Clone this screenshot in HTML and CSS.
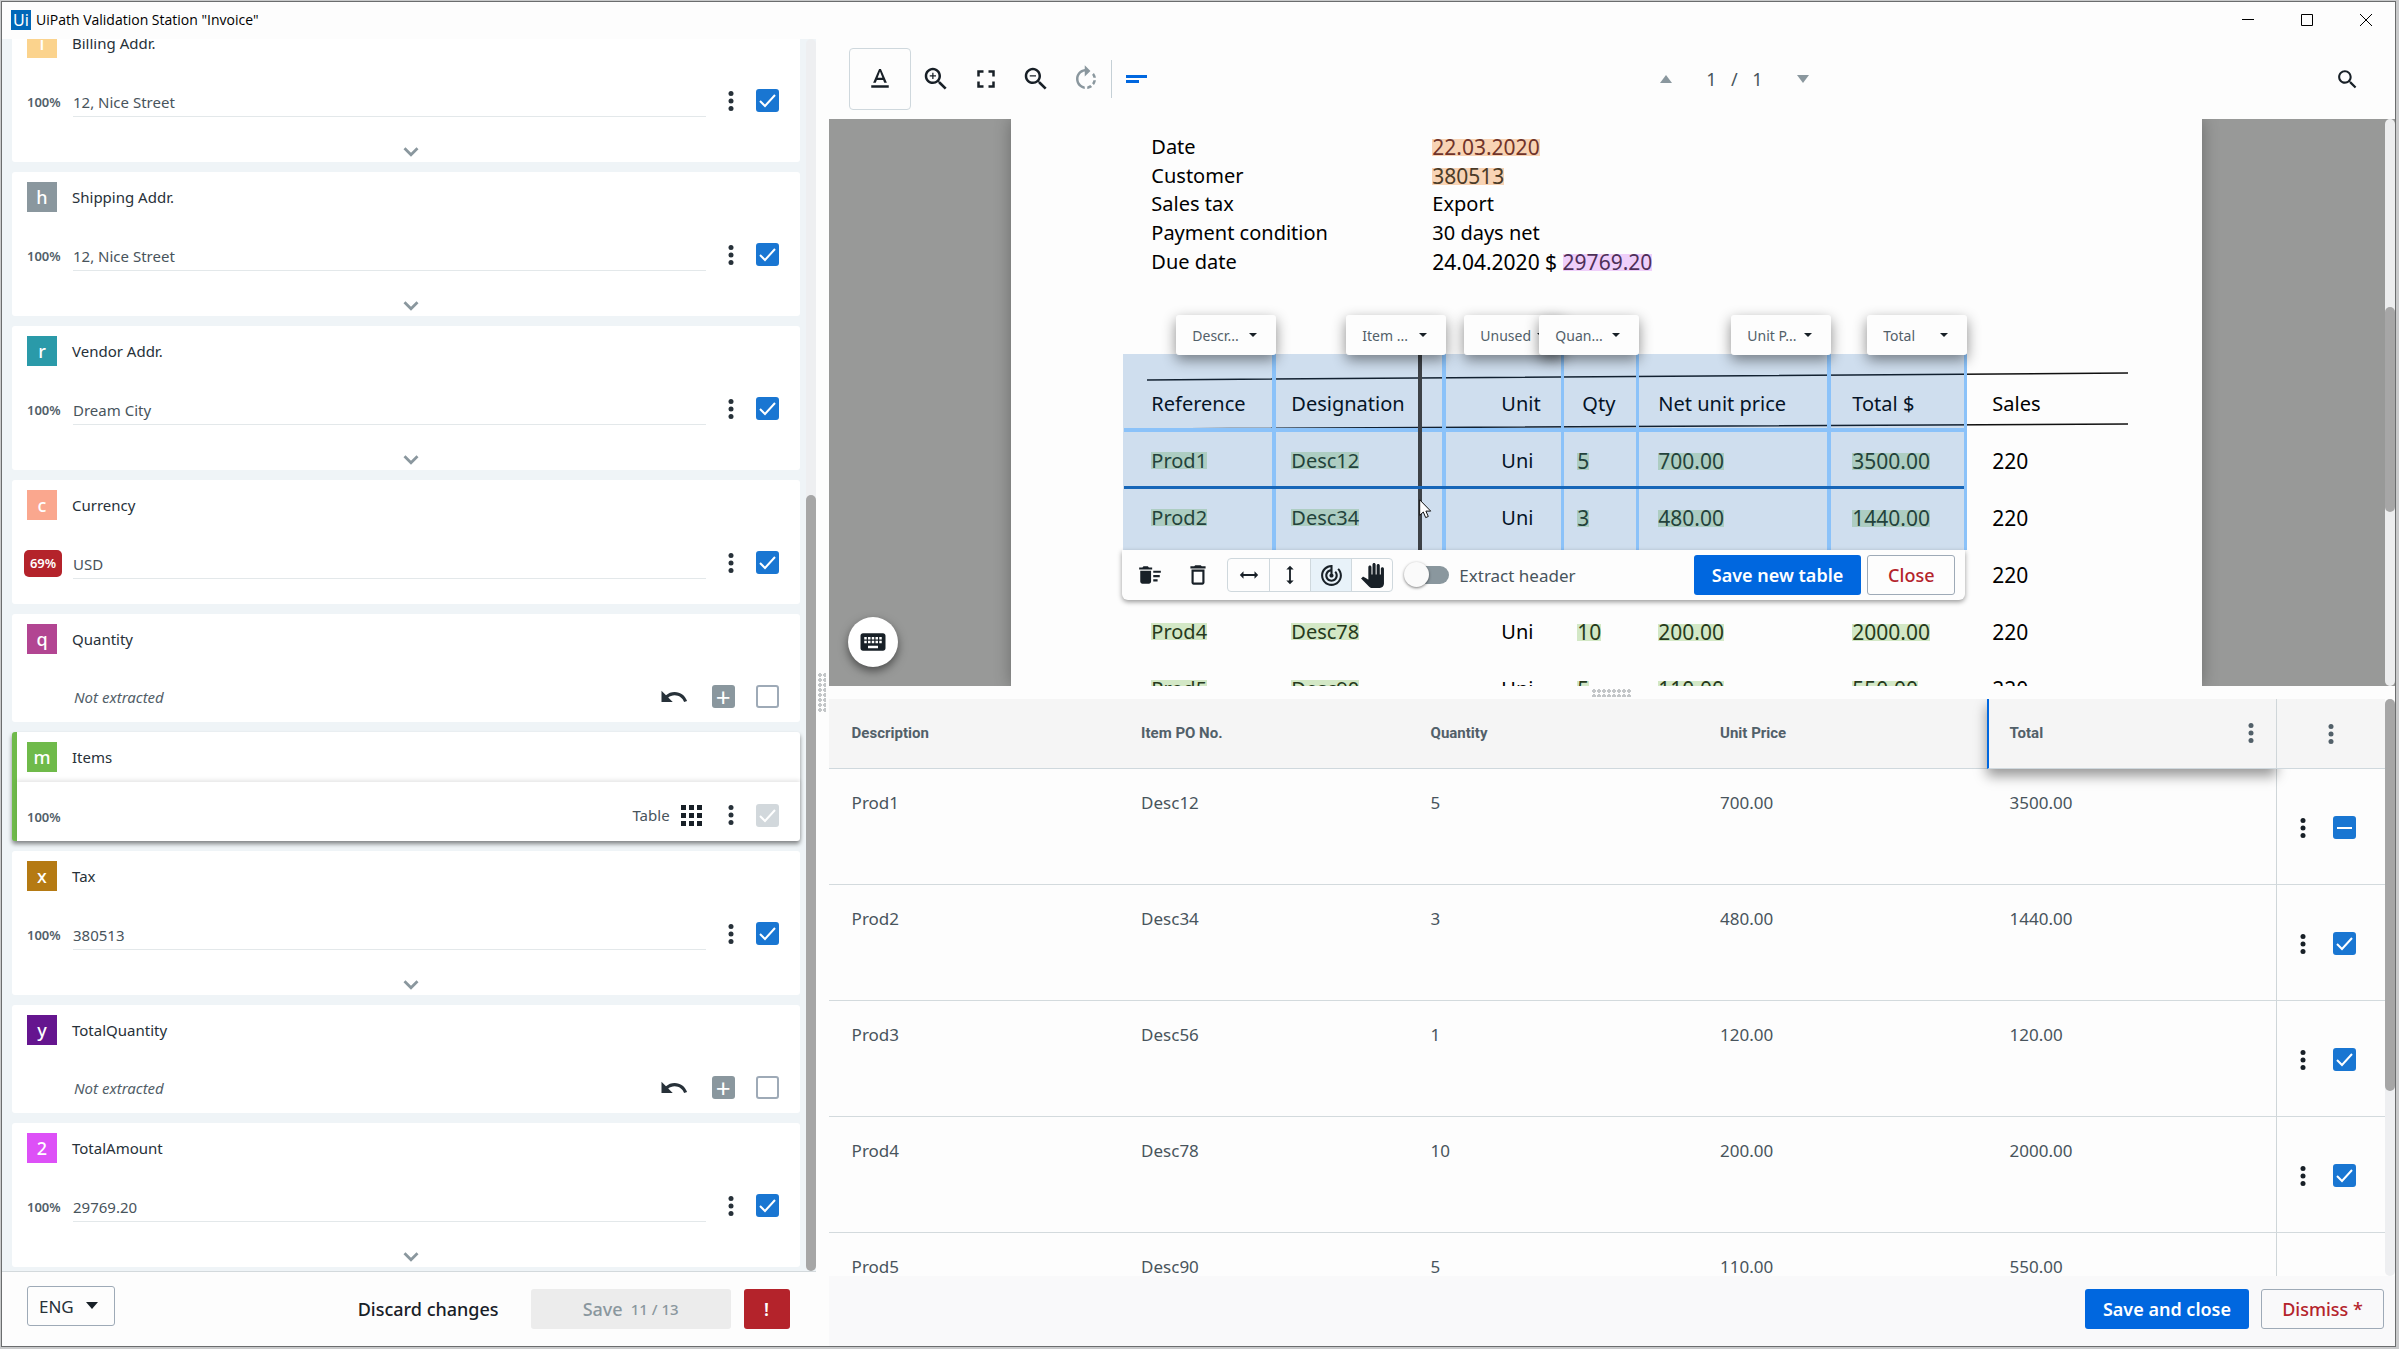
FILE: index.html
```html
<!DOCTYPE html>
<html lang="en">
<head>
    <meta charset="UTF-8">
    <meta name="viewport" content="width=device-width, initial-scale=1.0">
    <title>UiPath Validation Station "Invoice"</title>
    <link rel="stylesheet" href="styles.css">
</head>
<body>
    <svg class="sprite" width="0" height="0">
        <symbol id="i-dots" viewBox="0 0 24 24"><circle cx="12" cy="6" r="2"/><circle cx="12" cy="12" r="2"/><circle cx="12" cy="18" r="2"/></symbol>
        <symbol id="i-undo" viewBox="0 0 24 24"><path d="M12.5 8c-2.65 0-5.05.99-6.9 2.6L2 7v9h9l-3.62-3.62c1.39-1.16 3.16-1.88 5.12-1.88 3.54 0 6.55 2.31 7.6 5.5l2.37-.78C21.08 11.03 17.15 8 12.5 8z"/></symbol>
        <symbol id="i-chevron" viewBox="0 0 16 12"><path d="M2 2l6 6 6-6" fill="none" stroke="currentColor" stroke-width="2.6"/></symbol>
        <symbol id="i-search" viewBox="0 0 24 24"><path d="M15.5 14h-.79l-.28-.27C15.41 12.59 16 11.11 16 9.5 16 5.91 13.09 3 9.5 3S3 5.91 3 9.5 5.91 16 9.5 16c1.61 0 3.09-.59 4.23-1.57l.27.28v.79l5 4.99L20.49 19l-4.99-5zm-6 0C7.01 14 5 11.99 5 9.5S7.01 5 9.5 5 14 7.01 14 9.5 11.99 14 9.5 14z"/></symbol>
    </svg>

    <div class="window">
        <header class="titlebar">
            <span class="app-icon">Ui</span>
            <h1>UiPath Validation Station "Invoice"</h1>
            <div class="window-buttons">
                <button aria-label="Minimize"><svg width="12" height="12"><path d="M0 5.5h12"/></svg></button>
                <button aria-label="Maximize"><svg width="12" height="12"><path d="M.5.5h11v11H.5z"/></svg></button>
                <button aria-label="Close window"><svg width="12" height="12"><path d="M0 0l12 12M12 0L0 12"/></svg></button>
            </div>
        </header>

        <div class="content">
            <section class="sidebar">
                <div class="fields">
                    <div class="cards">
                        <div class="card">
                            <div class="card-head"><span class="badge billing">i</span><label for="billing">Billing Addr.</label></div>
                            <div class="card-row">
                                <span class="score">100%</span>
                                <input class="value" type="text" id="billing" value="12, Nice Street">
                                <button class="icon-btn" aria-label="Options"><svg><use href="#i-dots"/></svg></button>
                                <input type="checkbox" aria-label="Confirm Billing Addr." checked>
                            </div>
                            <button class="expand" aria-label="Expand"><svg><use href="#i-chevron"/></svg></button>
                        </div>
                        <div class="card">
                            <div class="card-head"><span class="badge shipping">h</span><label for="shipping">Shipping Addr.</label></div>
                            <div class="card-row">
                                <span class="score">100%</span>
                                <input class="value" type="text" id="shipping" value="12, Nice Street">
                                <button class="icon-btn" aria-label="Options"><svg><use href="#i-dots"/></svg></button>
                                <input type="checkbox" aria-label="Confirm Shipping Addr." checked>
                            </div>
                            <button class="expand" aria-label="Expand"><svg><use href="#i-chevron"/></svg></button>
                        </div>
                        <div class="card">
                            <div class="card-head"><span class="badge vendor">r</span><label for="vendor">Vendor Addr.</label></div>
                            <div class="card-row">
                                <span class="score">100%</span>
                                <input class="value" type="text" id="vendor" value="Dream City">
                                <button class="icon-btn" aria-label="Options"><svg><use href="#i-dots"/></svg></button>
                                <input type="checkbox" aria-label="Confirm Vendor Addr." checked>
                            </div>
                            <button class="expand" aria-label="Expand"><svg><use href="#i-chevron"/></svg></button>
                        </div>
                        <div class="card">
                            <div class="card-head"><span class="badge currency">c</span><label for="currency">Currency</label></div>
                            <div class="card-row">
                                <span class="score low">69%</span>
                                <input class="value" type="text" id="currency" value="USD">
                                <button class="icon-btn" aria-label="Options"><svg><use href="#i-dots"/></svg></button>
                                <input type="checkbox" aria-label="Confirm Currency" checked>
                            </div>
                        </div>
                        <div class="card missing">
                            <div class="card-head"><span class="badge quantity">q</span><span>Quantity</span></div>
                            <div class="card-row">
                                <em>Not extracted</em>
                                <button class="icon-btn undo" aria-label="Undo"><svg><use href="#i-undo"/></svg></button>
                                <button class="add" aria-label="Add value">+</button>
                                <input type="checkbox" aria-label="Confirm Quantity">
                            </div>
                        </div>
                        <div class="card items">
                            <div class="card-head"><span class="badge item">m</span><span>Items</span></div>
                            <div class="card-row">
                                <span class="score">100%</span>
                                <button class="table-btn">Table
                                    <svg width="21" height="21" viewBox="0 0 21 21"><path d="M0 0h5v5H0zM8 0h5v5H8zM16 0h5v5h-5zM0 8h5v5H0zM8 8h5v5H8zM16 8h5v5h-5zM0 16h5v5H0zM8 16h5v5H8zM16 16h5v5h-5z"/></svg>
                                </button>
                                <button class="icon-btn" aria-label="Options"><svg><use href="#i-dots"/></svg></button>
                                <input type="checkbox" aria-label="Confirm Items" checked disabled>
                            </div>
                        </div>
                        <div class="card">
                            <div class="card-head"><span class="badge tax">x</span><label for="tax">Tax</label></div>
                            <div class="card-row">
                                <span class="score">100%</span>
                                <input class="value" type="text" id="tax" value="380513">
                                <button class="icon-btn" aria-label="Options"><svg><use href="#i-dots"/></svg></button>
                                <input type="checkbox" aria-label="Confirm Tax" checked>
                            </div>
                            <button class="expand" aria-label="Expand"><svg><use href="#i-chevron"/></svg></button>
                        </div>
                        <div class="card missing">
                            <div class="card-head"><span class="badge total-quantity">y</span><span>TotalQuantity</span></div>
                            <div class="card-row">
                                <em>Not extracted</em>
                                <button class="icon-btn undo" aria-label="Undo"><svg><use href="#i-undo"/></svg></button>
                                <button class="add" aria-label="Add value">+</button>
                                <input type="checkbox" aria-label="Confirm TotalQuantity">
                            </div>
                        </div>
                        <div class="card">
                            <div class="card-head"><span class="badge total-amount">2</span><label for="amount">TotalAmount</label></div>
                            <div class="card-row">
                                <span class="score">100%</span>
                                <input class="value" type="text" id="amount" value="29769.20">
                                <button class="icon-btn" aria-label="Options"><svg><use href="#i-dots"/></svg></button>
                                <input type="checkbox" aria-label="Confirm TotalAmount" checked>
                            </div>
                            <button class="expand" aria-label="Expand"><svg><use href="#i-chevron"/></svg></button>
                        </div>
                    </div>
                    <div class="scrollbar fields-scroll"><span></span></div>
                </div>
                <footer class="sidebar-footer">
                    <div class="dropdown lang">
                        <select aria-label="Language"><option>ENG</option></select>
                    </div>
                    <button class="btn text">Discard changes</button>
                    <button class="btn save" disabled>Save <small>11 / 13</small></button>
                    <button class="btn alert" aria-label="Report exception">!</button>
                </footer>
            </section>

            <div class="splitter vertical"><span></span></div>

            <main class="main">
                <div class="toolbar">
                    <div class="tools">
                        <button class="tool boxed" aria-label="Text mode"><svg viewBox="0 0 24 24"><path d="M5 17v2h14v-2H5zm4.500-4.200h5l.9 2.200h2.100L12.750 4h-1.500L6.500 15h2.100l.9-2.200zM12 5.980L13.870 11h-3.740L12 5.980z"/></svg></button>
                        <button class="tool" aria-label="Zoom in"><svg viewBox="0 0 24 24"><use href="#i-search"/><path d="M12 10h-2v2H9v-2H7V9h2V7h1v2h2v1z"/></svg></button>
                        <button class="tool" aria-label="Fit to screen"><svg viewBox="0 0 24 24"><path d="M7 14H5v5h5v-2H7v-3zm-2-4h2V7h3V5H5v5zm12 7h-3v2h5v-5h-2v3zM14 5v2h3v3h2V5h-5z"/></svg></button>
                        <button class="tool" aria-label="Zoom out"><svg viewBox="0 0 24 24"><use href="#i-search"/><path d="M7 9h5v1H7z"/></svg></button>
                        <button class="tool muted" aria-label="Rotate"><svg viewBox="0 0 24 24"><path d="M15.550 5.550L11 1v3.070C7.060 4.560 4 7.920 4 12s3.050 7.440 7 7.930v-2.020c-2.840-.48-5-2.940-5-5.910s2.160-5.430 5-5.910V10l4.550-4.450zM19.930 11c-.17-1.390-.72-2.730-1.620-3.890l-1.420 1.420c.54.75.88 1.600 1.020 2.470h2.020zM13 17.900v2.020c1.390-.17 2.740-.71 3.900-1.610l-1.440-1.440c-.75.54-1.590.89-2.460 1.030zm3.890-2.420l1.420 1.410c.9-1.160 1.450-2.500 1.620-3.890h-2.020c-.14.87-.48 1.720-1.020 2.480z"/></svg></button>
                        <button class="tool align" aria-label="Show text"><svg viewBox="0 0 30 30"><path d="M5 11h21v3H5zM5 16h13v3H5z"/></svg></button>
                    </div>
                    <div class="pager">
                        <button class="page-up" aria-label="Previous page"></button>
                        <span>1</span><span>/</span><span>1</span>
                        <button class="page-down" aria-label="Next page"></button>
                    </div>
                    <button class="tool find" aria-label="Search"><svg><use href="#i-search"/></svg></button>
                </div>

                <div class="viewer">
                    <div class="canvas">
                        <article class="page">
                            <dl class="info">
                                <dt>Date</dt><dd class="num"><mark class="date">22.03.2020</mark></dd>
                                <dt>Customer</dt><dd class="num"><mark class="customer">380513</mark></dd>
                                <dt>Sales tax</dt><dd>Export</dd>
                                <dt>Payment condition</dt><dd>30 days net</dd>
                                <dt>Due date</dt><dd class="num">24.04.2020 $ <mark class="amount">29769.20</mark></dd>
                            </dl>
                            <div class="lines">
                                <svg class="rules" width="1000" height="70"><path d="M0 17L981 10M0 66L981 61"/></svg>
                                <table class="doc-table">
                                    <colgroup><col class="w-ref"><col class="w-des"><col class="w-unit"><col class="w-qty"><col class="w-net"><col class="w-total"><col></colgroup>
                                    <tr><th>Reference</th><th>Designation</th><th>Unit</th><th class="qty">Qty</th><th>Net unit price</th><th>Total $</th><th>Sales</th></tr>
                                    <tr><td><mark>Prod1</mark></td><td><mark>Desc12</mark></td><td>Uni</td><td class="num"><mark>5</mark></td><td class="num"><mark>700.00</mark></td><td class="num"><mark>3500.00</mark></td><td class="num">220</td></tr>
                                    <tr><td><mark>Prod2</mark></td><td><mark>Desc34</mark></td><td>Uni</td><td class="num"><mark>3</mark></td><td class="num"><mark>480.00</mark></td><td class="num"><mark>1440.00</mark></td><td class="num">220</td></tr>
                                    <tr><td><mark>Prod3</mark></td><td><mark>Desc56</mark></td><td>Uni</td><td class="num"><mark>1</mark></td><td class="num"><mark>120.00</mark></td><td class="num"><mark>120.00</mark></td><td class="num">220</td></tr>
                                    <tr><td><mark>Prod4</mark></td><td><mark>Desc78</mark></td><td>Uni</td><td class="num"><mark>10</mark></td><td class="num"><mark>200.00</mark></td><td class="num"><mark>2000.00</mark></td><td class="num">220</td></tr>
                                    <tr><td><mark>Prod5</mark></td><td><mark>Desc90</mark></td><td>Uni</td><td class="num"><mark>5</mark></td><td class="num"><mark>110.00</mark></td><td class="num"><mark>550.00</mark></td><td class="num">220</td></tr>
                                </table>

                                <!-- table selection drawn over the scanned page -->
                                <div class="selection">
                                    <span class="row-line r1"></span>
                                    <span class="col-line c1"></span>
                                    <span class="col-line c3"></span>
                                    <span class="col-line thin c4"></span>
                                    <span class="col-line thin c5"></span>
                                    <span class="col-line c6"></span>
                                    <span class="col-line thin c7"></span>
                                    <span class="col-line dragged c2"></span>
                                    <span class="row-line active r2"></span>
                                    <div class="dropdown col-type t1"><select aria-label="Column 1"><option>Descr...</option></select></div>
                                    <div class="dropdown col-type t2"><select aria-label="Column 2"><option>Item ...</option></select></div>
                                    <div class="dropdown col-type t3"><select aria-label="Column 3"><option>Unused</option></select></div>
                                    <div class="dropdown col-type t4"><select aria-label="Column 4"><option>Quan...</option></select></div>
                                    <div class="dropdown col-type t5"><select aria-label="Column 5"><option>Unit P...</option></select></div>
                                    <div class="dropdown col-type t6"><select aria-label="Column 6"><option>Total</option></select></div>
                                    <div class="table-tools">
                                        <button class="small-tool" aria-label="Clear"><svg viewBox="0 0 24 24"><path d="M15 16h4v2h-4zm0-8h7v2h-7zm0 4h6v2h-6zM3 18c0 1.100.9 2 2 2h6c1.100 0 2-.9 2-2V8H3v10zM14 5h-3l-1-1H6L5 5H2v2h12z"/></svg></button>
                                        <button class="small-tool" aria-label="Delete"><svg viewBox="0 0 24 24"><path d="M6 19c0 1.100.9 2 2 2h8c1.100 0 2-.9 2-2V7H6v12zM8 9h8v10H8V9zm7.500-5l-1-1h-5l-1 1H5v2h14V4h-3.500z"/></svg></button>
                                        <div class="tool-group">
                                            <button aria-label="Horizontal"><svg viewBox="0 0 24 24"><path d="M6 8l-4 4 4 4v-3h12v3l4-4-4-4v3H6z"/></svg></button>
                                            <button aria-label="Vertical"><svg viewBox="0 0 24 24"><path d="M8 6l4-4 4 4h-3v12h3l-4 4-4-4h3V6z"/></svg></button>
                                            <button class="on" aria-label="Detect"><svg viewBox="0 0 24 24"><path d="M19.070 4.930l-1.410 1.410C19.100 7.790 20 9.790 20 12c0 4.420-3.580 8-8 8s-8-3.580-8-8c0-4.080 3.050-7.440 7-7.930v2.020C8.160 6.570 6 9.030 6 12c0 3.310 2.690 6 6 6s6-2.690 6-6c0-1.660-.67-3.160-1.760-4.240l-1.410 1.410C15.550 9.900 16 10.900 16 12c0 2.210-1.790 4-4 4s-4-1.790-4-4c0-1.860 1.280-3.410 3-3.860v2.140c-.6.35-1 .98-1 1.720 0 1.100.9 2 2 2s2-.9 2-2c0-.74-.4-1.380-1-1.720V2h-1C6.480 2 2 6.480 2 12s4.480 10 10 10 10-4.480 10-10c0-2.760-1.120-5.260-2.930-7.070z"/></svg></button>
                                            <button class="hand" aria-label="Move"><svg viewBox="0 0 24 24"><path d="M23 5.500V20c0 2.200-1.800 4-4 4h-7.300c-1.080 0-2.100-.43-2.850-1.190L1 14.830s1.260-1.230 1.300-1.250c.22-.19.49-.29.79-.29.22 0 .42.060.6.160.04.010 4.310 2.460 4.310 2.460V4c0-.83.67-1.500 1.500-1.500S11 3.170 11 4v7h1V1.500c0-.83.67-1.500 1.500-1.500S15 .67 15 1.500V11h1V2.500c0-.83.67-1.500 1.500-1.500s1.500.67 1.500 1.500V11h1V5.500c0-.83.67-1.500 1.500-1.500s1.500.67 1.500 1.500z"/></svg></button>
                                        </div>
                                        <label class="switch"><input type="checkbox"><span class="track"></span>Extract header</label>
                                        <button class="btn primary">Save new table</button>
                                        <button class="btn danger">Close</button>
                                    </div>
                                    <svg class="cursor" width="13" height="20"><path d="M.7.8v15.500l3.600-3.300 2.400 5.600 2.600-1.100-2.400-5.400h4.800z"/></svg>
                                </div>
                            </div>
                        </article>
                        <button class="keyboard" aria-label="Keyboard shortcuts"><svg viewBox="0 0 24 24"><path d="M20 5H4c-1.100 0-1.990.9-1.990 2L2 17c0 1.100.9 2 2 2h16c1.100 0 2-.9 2-2V7c0-1.100-.9-2-2-2zm-9 3h2v2h-2V8zm0 3h2v2h-2v-2zM8 8h2v2H8V8zm0 3h2v2H8v-2zm-1 2H5v-2h2v2zm0-3H5V8h2v2zm9 7H8v-2h8v2zm0-4h-2v-2h2v2zm0-3h-2V8h2v2zm3 3h-2v-2h2v2zm0-3h-2V8h2v2z"/></svg></button>
                    </div>
                    <div class="scrollbar viewer-scroll"><span></span></div>
                </div>

                <div class="splitter horizontal"><span></span></div>

                <div class="results">
                    <div class="results-body">
                        <table class="items-table">
                            <thead>
                                <tr>
                                    <th>Description</th>
                                    <th>Item PO No.</th>
                                    <th>Quantity</th>
                                    <th>Unit Price</th>
                                    <th class="selected"><div>Total <button class="icon-btn" aria-label="Column options"><svg><use href="#i-dots"/></svg></button></div></th>
                                    <th class="actions"><button class="icon-btn" aria-label="Table options"><svg><use href="#i-dots"/></svg></button></th>
                                </tr>
                            </thead>
                            <tbody>
                                <tr>
                                    <td>Prod1</td><td>Desc12</td><td>5</td><td>700.00</td><td>3500.00</td>
                                    <td class="actions"><div><button class="icon-btn" aria-label="Row options"><svg><use href="#i-dots"/></svg></button><input class="partial" type="checkbox" aria-label="Confirm row 1"></div></td>
                                </tr>
                                <tr>
                                    <td>Prod2</td><td>Desc34</td><td>3</td><td>480.00</td><td>1440.00</td>
                                    <td class="actions"><div><button class="icon-btn" aria-label="Row options"><svg><use href="#i-dots"/></svg></button><input type="checkbox" aria-label="Confirm row 2" checked></div></td>
                                </tr>
                                <tr>
                                    <td>Prod3</td><td>Desc56</td><td>1</td><td>120.00</td><td>120.00</td>
                                    <td class="actions"><div><button class="icon-btn" aria-label="Row options"><svg><use href="#i-dots"/></svg></button><input type="checkbox" aria-label="Confirm row 3" checked></div></td>
                                </tr>
                                <tr>
                                    <td>Prod4</td><td>Desc78</td><td>10</td><td>200.00</td><td>2000.00</td>
                                    <td class="actions"><div><button class="icon-btn" aria-label="Row options"><svg><use href="#i-dots"/></svg></button><input type="checkbox" aria-label="Confirm row 4" checked></div></td>
                                </tr>
                                <tr>
                                    <td>Prod5</td><td>Desc90</td><td>5</td><td>110.00</td><td>550.00</td>
                                    <td class="actions"></td>
                                </tr>
                            </tbody>
                        </table>
                    </div>
                    <div class="scrollbar results-scroll"><span></span></div>
                </div>

                <footer class="main-footer">
                    <button class="btn primary">Save and close</button>
                    <button class="btn danger">Dismiss *</button>
                </footer>
            </main>
        </div>
    </div>
</body>
</html>
```

FILE: styles.css
```css
* {
    box-sizing: border-box;
}
body {
    margin: 0;
    height: 100vh;
    padding: 1px 3px 2px 1px;
    background: #c9cacb;
    color: #273139;
    font-family: "Noto Sans", "Open Sans", sans-serif;
    font-size: 15px;
}
button, input, select {
    font: inherit;
    color: inherit;
    margin: 0;
    padding: 0;
    border: none;
    background: none;
}
button {
    display: flex;
    align-items: center;
    justify-content: center;
    flex: none;
    cursor: pointer;
}
svg {
    fill: currentColor;
    display: block;
}
.sprite {
    position: absolute;
}
.window {
    height: 100%;
    display: flex;
    flex-direction: column;
    border: 1px solid #6b6d6e;
    background: #fdfdfd;
}

/* title bar */
.titlebar {
    display: flex;
    align-items: center;
    height: 37px;
    padding: 0 0 2px 9px;
    flex: none;
    color: #000;
}
.app-icon {
    width: 20px;
    height: 20px;
    margin-right: 5px;
    background: #0067b8;
    color: #fff;
    font-size: 16px;
    line-height: 20px;
    text-align: center;
}
.titlebar h1 {
    flex: 1;
    margin: 0;
    font: 14px "Open Sans", sans-serif;
}
.window-buttons {
    display: flex;
}
.window-buttons button {
    width: 59px;
    height: 36px;
}
.window-buttons svg {
    fill: none;
    stroke: #000;
}
.content {
    flex: 1;
    min-height: 0;
    display: grid;
    grid-template-columns: 34% 13px minmax(0, 1fr);
}

/* scrollbars */
.scrollbar {
    flex: none;
    width: 10px;
    display: flex;
    flex-direction: column;
    border-radius: 5px;
    background: #eeeff1;
}
.scrollbar span {
    border-radius: 5px;
    background: #a6a6a6;
}
.fields-scroll {
    justify-content: flex-end;
}
.fields-scroll span {
    height: 63%;
}
.viewer-scroll {
    background: #ecedee;
    padding-top: 188px;
}
.viewer-scroll span {
    height: 205px;
}
.results-scroll span {
    height: 68%;
}

/* checkboxes */
input[type="checkbox"] {
    appearance: none;
    flex: none;
    width: 23px;
    height: 23px;
    border: 2px solid #9eaab7;
    border-radius: 3px;
    background: #fff center / 19px 19px no-repeat;
}
input[type="checkbox"]:checked {
    border-color: #1976d2;
    background-color: #1976d2;
    background-image: url('data:image/svg+xml,<svg xmlns="http://www.w3.org/2000/svg" viewBox="0 0 19 19"><path d="M2 10l5 5L17 4" fill="none" stroke="white" stroke-width="2"/></svg>');
}
input[type="checkbox"]:disabled {
    border-color: #d2d8dc;
    background-color: #d2d8dc;
}
input.partial[type="checkbox"] {
    border-color: #1976d2;
    background-color: #1976d2;
    background-image: linear-gradient(#fff, #fff);
    background-size: 15px 2px;
}

/* left panel */
.sidebar {
    display: flex;
    flex-direction: column;
    min-height: 0;
}
.fields {
    flex: 1;
    min-height: 0;
    display: flex;
    background: #eff4f7;
}
.cards {
    flex: 1;
    min-width: 0;
    display: flex;
    flex-direction: column;
    justify-content: flex-end;
    gap: 10px;
    overflow: hidden;
    padding: 0 6px 4px 10px;
}
.card {
    flex: none;
    padding: 10px 21px 25px 15px;
    border-radius: 3px;
    background: #fff;
}
.card:has(.expand) {
    padding-bottom: 0;
}
.card.missing {
    padding-bottom: 9px;
}
.card-head {
    display: flex;
    align-items: center;
    gap: 15px;
    height: 30px;
    padding-bottom: 1px;
}
.badge {
    width: 30px;
    height: 30px;
    margin-top: 1px;
    color: #fff;
    font-size: 18px;
    font-weight: 500;
    line-height: 30px;
    text-align: center;
}
.billing { background: #fbd38d; }
.shipping { background: #8a979e; }
.vendor { background: #2a9aa9; }
.currency { background: #faa78e; }
.quantity { background: #b24592; }
.item { background: #6fba4a; }
.tax { background: #b57a13; }
.total-quantity { background: #65158f; }
.total-amount { background: #dd50f7; }
.card-row {
    display: flex;
    align-items: center;
    height: 33px;
    margin-top: 26px;
}
.score {
    width: 46px;
    padding-top: 3px;
    font-size: 13px;
    font-weight: 600;
    color: #526069;
}
.score.low {
    width: 38px;
    height: 27px;
    margin: 2px 11px 0 -3px;
    padding: 0;
    border-radius: 5px;
    background: #b4232b;
    color: #fff;
    line-height: 27px;
    text-align: center;
}
.value {
    flex: 1;
    min-width: 0;
    height: 33px;
    padding-top: 3px;
    border-bottom: 1px solid #e3e8ea;
    color: #48545c;
}
.icon-btn {
    width: 30px;
    height: 30px;
    margin: 0 10px;
}
.icon-btn svg {
    width: 30px;
    height: 30px;
}
.card-row em {
    flex: 1;
    padding-left: 47px;
    color: #526069;
}
.undo {
    margin-right: 23px;
}
.add {
    width: 23px;
    height: 23px;
    margin-right: 21px;
    border-radius: 3px;
    background: #8a979e;
    color: #fff;
    font-size: 26px;
    line-height: 20px;
}
.expand {
    width: 56px;
    height: 20px;
    margin: 25px auto 0;
    padding-left: 16px;
    color: #8a979e;
}
.card .expand svg {
    width: 20px;
    height: 13px;
}
.card.items {
    padding: 10px 0 0 10px;
    border-left: 5px solid #6fba4a;
    box-shadow: 0 3px 4px rgba(0, 0, 0, 0.45);
}
.items .card-row {
    height: 59px;
    margin: 10px 0 0 -10px;
    padding: 7px 21px 0 10px;
    box-shadow: 0 -2px 4px rgba(0, 0, 0, 0.1);
}
.table-btn {
    gap: 11px;
    margin-left: auto;
    margin-right: 4px;
    color: #48545c;
}
.table-btn svg {
    color: #182027;
}
.sidebar-footer {
    display: flex;
    align-items: center;
    height: 75px;
    padding: 0 26px 1px 25px;
    border-top: 1px solid #d3d9dc;
}

/* drop-downs */
.dropdown {
    position: relative;
}
.dropdown::after {
    content: "";
    position: absolute;
    top: 50%;
    right: 17px;
    border: 5px solid transparent;
    border-top-color: #182027;
    border-bottom: none;
    margin-top: -2px;
    pointer-events: none;
}
.dropdown select {
    appearance: none;
    width: 100%;
    height: 100%;
}
.lang {
    width: 88px;
    height: 40px;
    margin: 0 auto 5px 0;
    border: 1px solid #9eaab7;
    border-radius: 3px;
}
.lang select {
    padding-left: 11px;
    font-size: 17px;
}
.lang::after {
    right: 16px;
    border-width: 7px 6px 0;
    margin-top: -4px;
}

/* buttons */
.btn {
    height: 40px;
    padding: 0 18px;
    border-radius: 3px;
    font-size: 18px;
    font-weight: 600;
}
.btn.text {
    padding: 0 32px;
    color: #182027;
    font-weight: 500;
}
.btn.save {
    width: 200px;
    gap: 8px;
    margin-right: 13px;
    background: #ececec;
    color: #8a979e;
    font-weight: 500;
}
.save small {
    font-size: 15px;
}
.btn.alert {
    width: 46px;
    background: #b4232b;
    color: #fff;
}
.btn.primary {
    background: #0067df;
    color: #fff;
}
.btn.danger {
    border: 1px solid #9eaab7;
    color: #b4232b;
    font-weight: 500;
}

/* splitters */
.splitter {
    display: flex;
    align-items: center;
    justify-content: center;
}
.splitter span {
    width: 8px;
    height: 40px;
    background: radial-gradient(circle at 2px 2px, #c3c6c8 2px, transparent 2px) 0 0 / 5px 5px;
}
.splitter.horizontal {
    flex: none;
    height: 13px;
}
.splitter.horizontal span {
    width: 40px;
    height: 8px;
}

/* right side */
.main {
    display: flex;
    flex-direction: column;
    min-width: 0;
    min-height: 0;
}
.toolbar {
    flex: none;
    display: flex;
    align-items: center;
    justify-content: space-between;
    height: 80px;
    padding: 0 7px 0 20px;
    color: #182027;
}
.tools {
    display: flex;
    align-items: center;
}
.tool {
    width: 50px;
    height: 38px;
}
.tool svg {
    width: 30px;
    height: 30px;
}
.tool.boxed {
    width: 62px;
    height: 62px;
    border: 1px solid #cfd8dd;
    border-radius: 4px;
}
.tool.muted {
    color: #8a979e;
}
.tool.align {
    border-left: 1px solid #c5d0d6;
    color: #0067df;
}
.tool.find {
    width: 80px;
}
.tool.find svg {
    width: 25px;
    height: 25px;
}
.pager {
    display: flex;
    align-items: center;
    font-size: 18px;
    color: #48545c;
}
.pager span {
    width: 23px;
    text-align: center;
}
.page-up, .page-down {
    border: 6px solid transparent;
    margin: 0 28px;
}
.page-up {
    border-bottom: 8px solid #8a979e;
    border-top: none;
}
.page-down {
    border-top: 8px solid #8a979e;
    border-bottom: none;
}

/* document viewer */
.viewer {
    flex: 567 1 0;
    min-height: 0;
    display: flex;
    background: #989998;
}
.canvas {
    position: relative;
    flex: 1;
    min-width: 0;
    display: flex;
    justify-content: center;
    overflow: hidden;
}
.page {
    flex: none;
    width: 1191px;
    padding: 14px 0 0 140px;
    background: #fdfdfd;
    box-shadow: 0 0 16px rgba(0, 0, 0, 0.3);
    color: #000;
    font-size: 20px;
}
.info {
    display: grid;
    grid-template-columns: 281px 1fr;
    grid-auto-rows: 1fr;
    align-items: center;
    height: 143px;
    margin: 0 0 99px;
    line-height: 28px;
}
.info dd {
    margin: 0;
}
.page .num {
    font-size: 21px;
}
mark {
    display: inline-block;
    height: 17px;
    line-height: 17px;
    background: #d3e8c6;
    color: #263a1c;
}
mark.date {
    background: #f8d3b4;
    color: #70332a;
}
mark.customer {
    background: #f8d3b4;
    color: #4b3b28;
}
mark.amount {
    background: #efcffa;
    color: #4d2f58;
}
.lines {
    position: relative;
}
.rules {
    position: absolute;
    left: -4px;
    top: -12px;
    stroke: #111;
    stroke-width: 1.500;
}
.doc-table {
    width: 100%;
    table-layout: fixed;
    border-collapse: collapse;
}
.doc-table th, .doc-table td {
    height: 57px;
    padding: 0;
    font-weight: 400;
    text-align: left;
}
.doc-table th.qty {
    padding-left: 5px;
}
.w-ref { width: 140px; }
.w-des { width: 210px; }
.w-unit { width: 76px; }
.w-qty { width: 81px; }
.w-net { width: 194px; }
.w-total { width: 140px; }

.selection {
    position: absolute;
    left: -28px;
    top: -21px;
    width: 844px;
    height: 196px;
    background: rgba(23, 99, 178, 0.2);
}
.row-line, .col-line {
    position: absolute;
    background: #8bc2f9;
}
.row-line {
    left: 1px;
    right: 3px;
    height: 4px;
}
.row-line.active {
    height: 3px;
    background: #1766b8;
}
.col-line {
    top: 0;
    bottom: 0;
    width: 4px;
}
.col-line.thin {
    width: 3px;
}
.col-line.dragged {
    background: #3d4146;
}
.r1 { top: 74px; }
.r2 { top: 132px; }
.c1 { left: 149px; }
.c2 { left: 295px; }
.c3 { left: 319px; }
.c4 { left: 438px; }
.c5 { left: 513px; }
.c6 { left: 704px; }
.c7 { left: 841px; }
.col-type {
    position: absolute;
    top: -39px;
    width: 100px;
    height: 40px;
    border-radius: 3px;
    background: #fdfdfd;
    box-shadow: 0 5px 14px rgba(0, 0, 0, 0.45);
    color: #526069;
    font-size: 14px;
}
.col-type::after {
    right: 19px;
    border-width: 4px 4px 0;
}
.col-type select {
    padding-left: 16px;
}
.t1 { left: 53px; }
.t2 { left: 223px; }
.t3 { left: 341px; }
.t4 { left: 416px; }
.t5 { left: 608px; }
.t6 { left: 744px; }

.table-tools {
    position: absolute;
    top: 196px;
    left: -1px;
    right: 2px;
    display: flex;
    align-items: center;
    height: 50px;
    padding: 0 10px 0 4px;
    border-radius: 0 0 6px 6px;
    background: #fdfdfd;
    box-shadow: 0 2px 5px rgba(0, 0, 0, 0.4);
    color: #182027;
}
.small-tool {
    width: 48px;
    height: 40px;
}
.table-tools svg {
    width: 26px;
    height: 26px;
}
.tool-group {
    display: flex;
    margin-left: 5px;
    border: 1px solid #cfd8dd;
    border-radius: 4px;
}
.tool-group button {
    width: 41px;
    height: 32px;
}
.tool-group button + button {
    border-left: 1px solid #cfd8dd;
}
.table-tools .tool-group svg {
    width: 22px;
    height: 22px;
}
.table-tools .tool-group .on svg, .table-tools .tool-group .hand svg {
    width: 25px;
    height: 25px;
}
.tool-group .on {
    background: #e8f2f9;
}
.switch {
    display: flex;
    align-items: center;
    margin: 0 auto 0 13px;
    color: #48545c;
    font-size: 17px;
}
.switch input {
    position: absolute;
    opacity: 0;
}
.track {
    position: relative;
    width: 43px;
    height: 18px;
    margin-right: 10px;
    border-radius: 9px;
    background: #8a979e;
}
.track::before {
    content: "";
    position: absolute;
    left: -2px;
    top: -4px;
    width: 25px;
    height: 25px;
    border-radius: 50%;
    background: #fafafa;
    box-shadow: 0 1px 3px rgba(0, 0, 0, 0.5);
}
.table-tools .btn + .btn {
    width: 88px;
    margin-left: 6px;
}
.cursor {
    position: absolute;
    left: 296px;
    top: 145px;
    fill: #fff;
    stroke: #111;
}
.keyboard {
    position: absolute;
    left: 19px;
    bottom: 19px;
    width: 50px;
    height: 50px;
    border-radius: 50%;
    background: #fff;
    box-shadow: 0 4px 10px rgba(0, 0, 0, 0.5);
    color: #182027;
}
.keyboard svg {
    width: 30px;
    height: 30px;
}

/* extracted rows */
.results {
    flex: 577 1 0;
    min-height: 0;
    display: flex;
}
.results-body {
    flex: 1;
    min-width: 0;
    overflow: hidden;
}
.items-table {
    width: 100%;
    table-layout: fixed;
    border-collapse: separate;
    border-spacing: 0;
    color: #48545c;
    font-size: 17px;
}
.items-table th {
    height: 70px;
    padding: 0 0 2px 23px;
    border-bottom: 1px solid #cfd8dd;
    background: #f5f5f5;
    color: #526069;
    font: 700 15px Roboto, sans-serif;
    text-align: left;
}
.items-table td {
    height: 116px;
    padding: 21px 0 0 23px;
    border-bottom: 1px solid #d3dadd;
    line-height: 26px;
    vertical-align: top;
}
.items-table th.selected {
    position: relative;
    padding-left: 21px;
    border-left: 2px solid #0067df;
    box-shadow: 0 7px 12px rgba(0, 0, 0, 0.4);
}
.selected div {
    display: flex;
    align-items: center;
    justify-content: space-between;
}
.items-table .actions {
    width: 7%;
    padding: 2px 0 0;
    border-left: 1px solid #cfd6d9;
    vertical-align: middle;
}
.items-table th.actions {
    position: relative;
    padding: 0;
}
th.actions .icon-btn {
    margin: 0 auto;
}
.actions div {
    display: flex;
    align-items: center;
    color: #182027;
}
.actions div .icon-btn {
    margin: 0 15px 0 11px;
}
.main-footer {
    flex: none;
    display: flex;
    align-items: center;
    justify-content: flex-end;
    gap: 12px;
    height: 70px;
    padding: 0 11px 5px;
    background: #f9f9fa;
}
.main-footer .btn.danger {
    width: 123px;
}
```
